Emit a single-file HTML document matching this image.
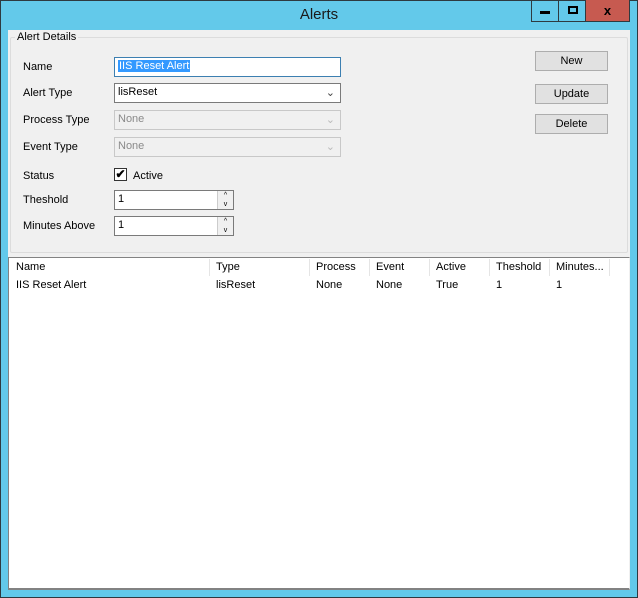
<!DOCTYPE html><html><head><style>
*{box-sizing:border-box;margin:0;padding:0}
body{width:638px;height:598px;background:#63c9ea;font-family:"Liberation Sans",sans-serif;font-size:11px;color:#000;position:relative;overflow:hidden}
.frame{position:absolute;left:0;top:0;width:638px;height:598px;border:1px solid #2e3a40;}
.a{position:absolute}
.title{left:0;top:6px;width:638px;text-align:center;font-size:15px;color:#1a1a1a}
.client{left:8px;top:30px;width:622px;height:560px;background:#f0f0f0}
.lbl{position:absolute;left:23px}
.in{position:absolute;background:#fff;border:1px solid #7a7a7a;height:20px;padding:2px 0 0 3px}
.dis{background:#f0f0f0;border-color:#c8c8c8;color:#8a8a8a}
.btn{position:absolute;left:535px;width:73px;height:20px;background:#e1e1e1;border:1px solid #adadad;text-align:center;padding-top:3px}
.hd{position:absolute;top:259px;height:17px;border-right:1px solid #e5e5e5;padding:2px 0 0 6px}
</style></head><body>
<div class="frame"></div>
<div class="a title">Alerts</div>
<div class="a" style="left:531px;top:0;width:55px;height:22px;border:1px solid #2e3a40;border-top:none"></div>
<div class="a" style="left:558px;top:0;width:1px;height:21px;background:#2e3a40"></div>
<div class="a" style="left:585px;top:0;width:45px;height:22px;background:#c75a50;border:1px solid #2e3a40;border-top:none;text-align:center;font-weight:bold;font-size:13px;padding-top:3px">x</div>
<div class="a" style="left:540px;top:11px;width:10px;height:3px;background:#000"></div>
<div class="a" style="left:568px;top:6px;width:10px;height:8px;border:2px solid #000"></div>
<div class="a client"></div>
<div class="a" style="left:10px;top:37px;width:618px;height:216px;border:1px solid #dcdcdc;border-radius:2px"></div>
<div class="a" style="left:15px;top:31px;background:#f0f0f0;padding:0 2px">Alert Details</div>
<div class="lbl" style="top:61px">Name</div>
<div class="lbl" style="top:87px">Alert Type</div>
<div class="lbl" style="top:114px">Process Type</div>
<div class="lbl" style="top:141px">Event Type</div>
<div class="lbl" style="top:170px">Status</div>
<div class="lbl" style="top:194px">Theshold</div>
<div class="lbl" style="top:220px">Minutes Above</div>
<div class="in" style="left:114px;top:57px;width:227px;border-color:#3c7fb1"><span style="background:#3399ff;color:#fff;padding:0 1px">IIS Reset Alert</span></div>
<div class="in" style="left:114px;top:83px;width:227px">lisReset<span style="position:absolute;right:5px;top:2px;color:#444">&#8964;</span></div>
<div class="in dis" style="left:114px;top:110px;width:227px">None<span style="position:absolute;right:5px;top:2px;color:#bbb">&#8964;</span></div>
<div class="in dis" style="left:114px;top:137px;width:227px">None<span style="position:absolute;right:5px;top:2px;color:#bbb">&#8964;</span></div>
<div class="a" style="left:114px;top:168px;width:13px;height:13px;border:1px solid #333;background:#fff;font-size:12px;line-height:11px;text-align:center;font-weight:bold">&#10004;</div>
<div class="a" style="left:133px;top:170px">Active</div>
<div class="in" style="left:114px;top:190px;width:120px">1<div class="a" style="right:0;top:0;width:16px;height:18px;border-left:1px solid #ccc;background:#f0f0f0;font-size:7px;text-align:center;line-height:9px">^<br>v</div></div>
<div class="in" style="left:114px;top:216px;width:120px">1<div class="a" style="right:0;top:0;width:16px;height:18px;border-left:1px solid #ccc;background:#f0f0f0;font-size:7px;text-align:center;line-height:9px">^<br>v</div></div>
<div class="btn" style="top:51px">New</div>
<div class="btn" style="top:84px">Update</div>
<div class="btn" style="top:114px">Delete</div>
<div class="a" style="left:8px;top:257px;width:622px;height:333px;background:#fff;border:1px solid #828282;border-right-color:#f0f0f0;border-bottom-width:2px"></div>
<div class="hd" style="left:10px;width:200px">Name</div>
<div class="hd" style="left:210px;width:100px">Type</div>
<div class="hd" style="left:310px;width:60px">Process</div>
<div class="hd" style="left:370px;width:60px">Event</div>
<div class="hd" style="left:430px;width:60px">Active</div>
<div class="hd" style="left:490px;width:60px">Theshold</div>
<div class="hd" style="left:550px;width:60px">Minutes...</div>
<div class="a" style="left:16px;top:279px">IIS Reset Alert</div>
<div class="a" style="left:216px;top:279px">lisReset</div>
<div class="a" style="left:316px;top:279px">None</div>
<div class="a" style="left:376px;top:279px">None</div>
<div class="a" style="left:436px;top:279px">True</div>
<div class="a" style="left:496px;top:279px">1</div>
<div class="a" style="left:556px;top:279px">1</div>
</body></html>
